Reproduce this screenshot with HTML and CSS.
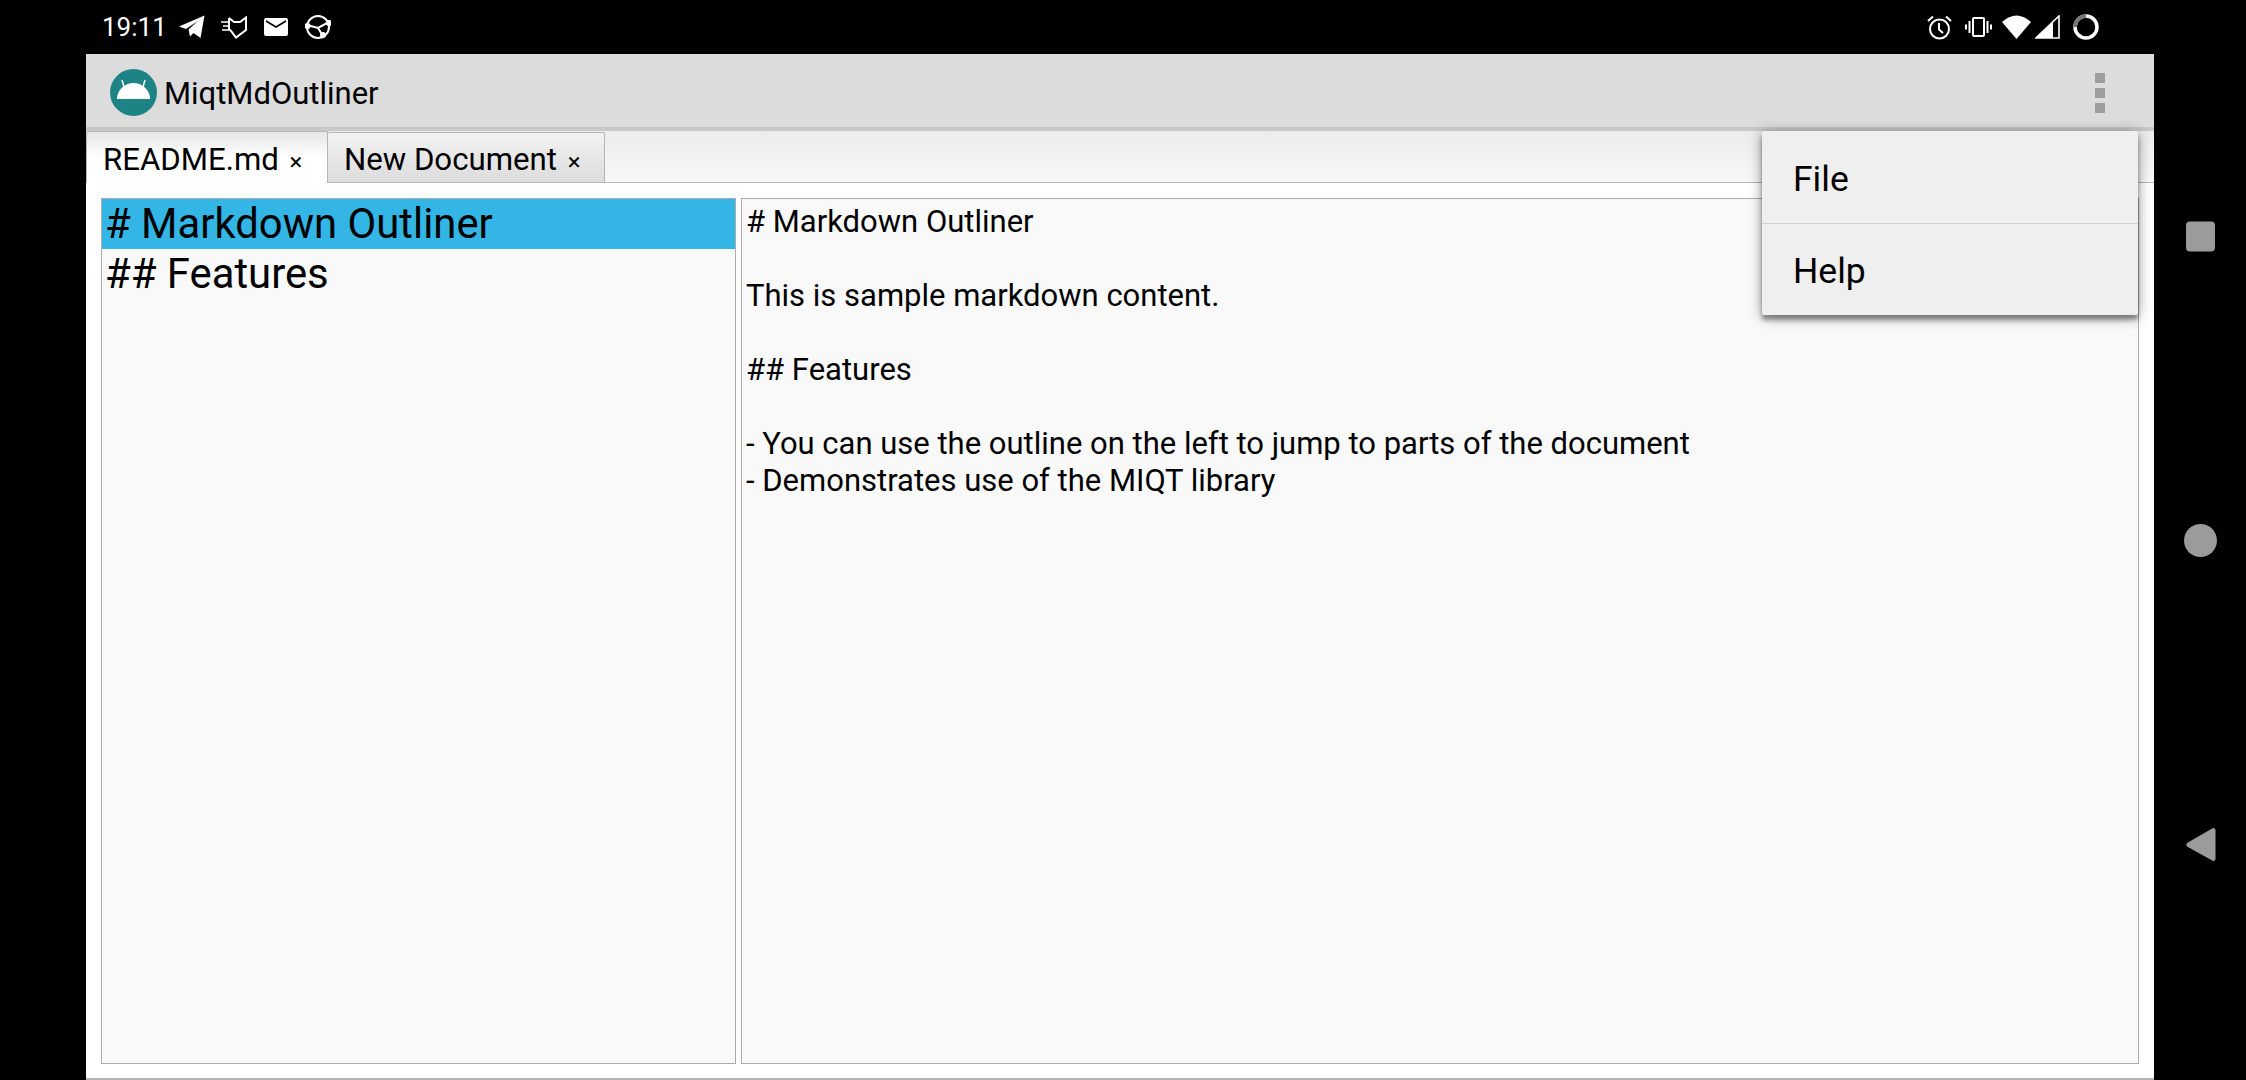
FILE: index.html
```html
<!DOCTYPE html>
<html lang="en">
<head>
  <meta charset="UTF-8" />
  <title>MiqtMdOutliner</title>
  <link rel="stylesheet" href="styles.css">
</head>
<body>
  <div class="status-bar">
    <div class="status-group">
      <span class="clock">19:11</span>
      <svg class="icon-telegram" width="26" height="24" viewBox="0 0 26 24"><path d="M0 11.500 25.500 0.500 21.500 23 14.500 18 11 21.500 9.500 14.500 19 6 7 14Z" fill="#fff"/></svg>
      <svg class="icon-cat" width="26" height="23" viewBox="0 0 26 23" fill="none" stroke="#fff" stroke-width="2"><path d="M8 2 13 6H19L25 1.500V14L15 21.500 10 15 8 13V2"/><path d="M0 6H7M2 10H8M1 14H8" stroke-width="1.600"/></svg>
      <svg class="icon-mail" width="24" height="18" viewBox="0 0 24 18"><path d="M2 0H22A2 2 0 0 1 24 2V16A2 2 0 0 1 22 18H2A2 2 0 0 1 0 16V2A2 2 0 0 1 2 0ZM2 4 12 10 22 4V2L12 8 2 2Z" fill="#fff" fill-rule="evenodd"/></svg>
      <svg class="icon-network" width="26" height="24" viewBox="0 0 26 24" fill="none" stroke="#fff" stroke-width="2"><circle cx="13" cy="12" r="11"/><path d="M2 10 13 13 24 7M13 13 18 21"/><circle cx="18" cy="20" r="2" fill="#fff"/><circle cx="24" cy="8" r="2" fill="#fff"/><circle cx="2.500" cy="11" r="2" fill="#fff"/></svg>
    </div>
    <div class="status-group status-right">
      <svg class="icon-alarm" width="25" height="25" viewBox="0 0 25 25" fill="none" stroke="#fff" stroke-width="2"><circle cx="12.500" cy="14" r="9.500"/><path d="M12 8V14.500L16 18M1 6 6 1.500M24 6 19 1.500"/></svg>
      <svg class="icon-vibrate" width="27" height="20" viewBox="0 0 27 20" fill="none" stroke="#fff" stroke-width="2"><rect x="8" y="1" width="11" height="18" rx="1"/><path d="M4.500 4V16M22.500 4V16M1 7.500V12.500M26 7.500V12.500"/></svg>
      <svg class="icon-wifi" width="29" height="24" viewBox="0 0 29 24"><path d="M0 7Q14.500 -6 29 7L14.500 24Z" fill="#fff"/></svg>
      <svg class="icon-signal" width="25" height="24" viewBox="0 0 25 24"><path d="M24 1V23H1Z" fill="none" stroke="#fff" stroke-width="1.600"/><path d="M18 7V23H1Z" fill="#fff"/></svg>
      <svg class="icon-battery" width="26" height="26" viewBox="0 0 26 26" fill="none" stroke-width="3.500"><circle cx="13" cy="13" r="11" stroke="#fff"/><path d="M2 13A11 11 0 0 1 13 2" stroke="#777"/></svg>
    </div>
  </div>

  <div class="screen">
    <div class="window">
      <div class="title-bar">
        <div class="app-icon">
          <svg width="47" height="47" viewBox="0 0 47 47"><circle cx="23.500" cy="23.500" r="23.500" fill="#1d8385"/><path d="M7 30A16.500 16 0 0 1 40 30Z" fill="#fff"/><path d="M14 18 12 11M33 18 35 11" stroke="#fff" stroke-width="1.500"/></svg>
        </div>
        <span class="app-title">MiqtMdOutliner</span>
        <div class="overflow-btn"><i></i><i></i><i></i></div>
      </div>

      <div class="tab-strip">
        <div class="tab tab-active">README.md <span class="tab-close">×</span></div>
        <div class="tab">New Document <span class="tab-close">×</span></div>
      </div>

      <div class="panes">
        <div class="pane outline">
          <div class="outline-row selected"># Markdown Outliner</div>
          <div class="outline-row">## Features</div>
        </div>
        <div class="pane editor"># Markdown Outliner

This is sample markdown content.

## Features

- You can use the outline on the left to jump to parts of the document
- Demonstrates use of the MIQT library</div>
      </div>

      <div class="menu">
        <div class="menu-item">File</div>
        <div class="menu-item">Help</div>
      </div>
    </div>

    <div class="nav-bar">
      <svg width="33" height="33" viewBox="0 0 33 33"><rect x="2" y="1.500" width="29" height="30" rx="4" fill="#9b9b9b"/></svg>
      <svg width="33" height="33" viewBox="0 0 33 33"><circle cx="16.500" cy="16.500" r="16.500" fill="#9b9b9b"/></svg>
      <svg width="33" height="33" viewBox="0 0 33 33"><path d="M29 0A2.500 2.500 0 0 1 31.500 2.500V30.500A2.500 2.500 0 0 1 29 33L3 18.500Q1.500 16.500 3 15Z" fill="#9b9b9b"/></svg>
    </div>
  </div>
</body>
</html>
```

FILE: styles.css
```css
html, body {
  margin: 0;
  padding: 0;
  height: 100%;
  overflow: hidden;
  background-color: #000;
  font-family: 'Roboto', sans-serif;
  color: #000;
}

.status-bar {
  height: 54px;
  display: flex;
  align-items: center;
  justify-content: space-between;
  padding: 0 147px 0 102px;
  color: #fff;
}

.status-group {
  display: flex;
  align-items: center;
  gap: 16px;
}

.status-right {
  gap: 13px;
}

.clock {
  font-size: 26px;
  margin-right: -4px;
}

.icon-mail {
  margin-left: 1px;
}

.icon-network {
  margin-left: 1px;
}

.icon-wifi {
  margin-left: -3px;
}

.icon-signal {
  margin-left: -9px;
}

.icon-battery {
  margin-left: 0;
}

.screen {
  display: flex;
  height: 1026px;
}

.window {
  position: relative;
  margin-left: 86px;
  width: 2068px;
  height: 1026px;
  box-sizing: border-box;
  background-color: #fff;
  display: flex;
  flex-direction: column;
  border-bottom: 2px solid #b3b3b3;
}

.title-bar {
  height: 69px;
  flex: none;
  display: flex;
  align-items: center;
  padding: 4px 49px 0 24px;
  background-color: #dcdcdc;
  border-bottom: 4px solid #c8c8c8;
}

.app-icon {
  width: 47px;
  height: 47px;
  margin-right: 7px;
}

.app-title {
  font-size: 31px;
  flex: 1;
  padding-top: 2px;
}

.overflow-btn {
  display: flex;
  flex-direction: column;
  gap: 5px;
}

.overflow-btn i {
  display: block;
  width: 10px;
  height: 10px;
  background-color: #9e9e9e;
}

.tab-strip {
  height: 52px;
  flex: none;
  box-sizing: border-box;
  display: flex;
  align-items: flex-end;
  border-bottom: 1px solid #b5b5b5;
  background: linear-gradient(#ececec, #f8f8f8);
}

.tab {
  height: 50px;
  box-sizing: border-box;
  padding: 0 23.500px 0 16px;
  font-size: 31.200px;
  line-height: 54px;
  white-space: nowrap;
  border: 1px solid #b5b5b5;
  border-bottom: none;
  border-left: none;
  border-radius: 2px 2px 0 0;
  background: linear-gradient(#f2f2f2, #dcdcdc);
}

.tab-active {
  height: 52px;
  margin-bottom: -1px;
  padding: 0 24.500px 0 16px;
  line-height: 56px;
  border-left: 1px solid #b5b5b5;
  background: linear-gradient(#e6e6e6, #fff 50%);
}

.tab-close {
  font-size: 24px;
  margin-left: 3px;
}

.panes {
  flex: 1;
  display: flex;
  gap: 5px;
  padding: 15px 15px 14px 15px;
  min-height: 0;
}

.pane {
  box-sizing: border-box;
  border: 1px solid #ababab;
  background-color: #f9f9f9;
}

.outline {
  width: 635px;
  flex: none;
}

.outline-row {
  height: 50px;
  line-height: 50px;
  font-size: 41.800px;
  padding-left: 3px;
  white-space: nowrap;
}

.outline-row.selected {
  background-color: #33b5e5;
}

.editor {
  flex: 1;
  padding: 4px 4px;
  font-size: 31px;
  line-height: 37px;
  white-space: pre-wrap;
}

.menu {
  position: absolute;
  top: 77px;
  right: 16px;
  width: 376px;
  height: 184px;
  display: flex;
  flex-direction: column;
  background-color: #efefef;
  border-radius: 2px;
  box-shadow: 0 5px 4px rgba(0, 0, 0, 0.35), 0 2px 14px rgba(0, 0, 0, 0.4);
}

.menu-item {
  flex: 1;
  display: flex;
  align-items: center;
  padding-left: 31px;
  padding-top: 4px;
  font-size: 35.500px;
}

.menu-item + .menu-item {
  border-top: 1px solid #d2d2d2;
}

.nav-bar {
  width: 92px;
  flex: none;
  display: flex;
  flex-direction: column;
  align-items: center;
  gap: 271px;
  padding-top: 166px;
  box-sizing: border-box;
}
```
